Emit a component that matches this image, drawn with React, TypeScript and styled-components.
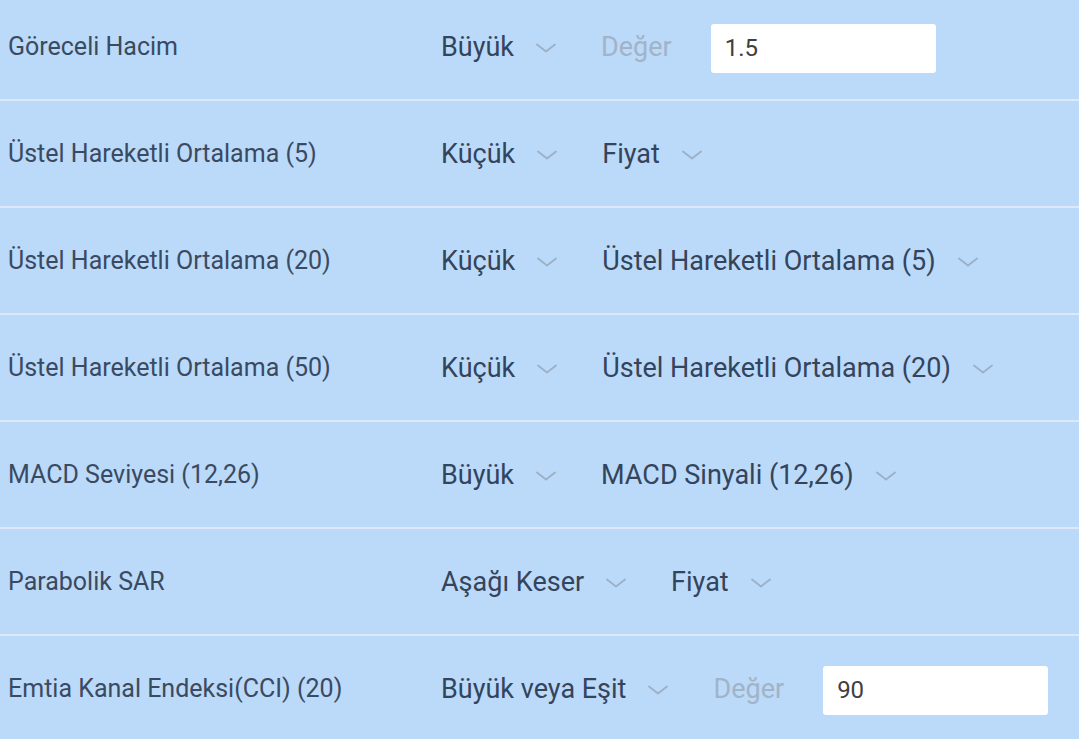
import React from "react";
import styled, { createGlobalStyle } from "styled-components";

const GlobalStyle = createGlobalStyle`
  html, body {
    margin: 0;
    padding: 0;
    background: #bbd9f9;
    overflow: hidden;
  }
  body {
    font-family: Roboto, "Noto Sans", sans-serif;
  }
`;

type Part =
  | { kind: "select"; text: string }
  | { kind: "value"; value: string };

type Rule = {
  label: string;
  parts: Part[];
};

const rules: Rule[] = [
  {
    label: "Göreceli Hacim",
    parts: [
      { kind: "select", text: "Büyük" },
      { kind: "value", value: "1.5" },
    ],
  },
  {
    label: "Üstel Hareketli Ortalama (5)",
    parts: [
      { kind: "select", text: "Küçük" },
      { kind: "select", text: "Fiyat" },
    ],
  },
  {
    label: "Üstel Hareketli Ortalama (20)",
    parts: [
      { kind: "select", text: "Küçük" },
      { kind: "select", text: "Üstel Hareketli Ortalama (5)" },
    ],
  },
  {
    label: "Üstel Hareketli Ortalama (50)",
    parts: [
      { kind: "select", text: "Küçük" },
      { kind: "select", text: "Üstel Hareketli Ortalama (20)" },
    ],
  },
  {
    label: "MACD Seviyesi (12,26)",
    parts: [
      { kind: "select", text: "Büyük" },
      { kind: "select", text: "MACD Sinyali (12,26)" },
    ],
  },
  {
    label: "Parabolik SAR",
    parts: [
      { kind: "select", text: "Aşağı Keser" },
      { kind: "select", text: "Fiyat" },
    ],
  },
  {
    label: "Emtia Kanal Endeksi(CCI) (20)",
    parts: [
      { kind: "select", text: "Büyük veya Eşit" },
      { kind: "value", value: "90" },
    ],
  },
];

const Chevron = () => (
  <ChevronIcon viewBox="0 0 20 10" fill="none">
    <path d="M1 1.5 L10 8.5 L19 1.5" stroke="#9cb0c6" strokeWidth="1.8" strokeLinecap="round" strokeLinejoin="round" />
  </ChevronIcon>
);

const App = () => {
  return (
    <>
      <GlobalStyle />
      <List>
        {rules.map((rule, idx) => (
          <Row key={idx} $last={idx === rules.length - 1}>
            <Label>{rule.label}</Label>
            <Controls>
              {rule.parts.map((part, i) =>
                part.kind === "select" ? (
                  <Select key={i}>
                    <SelectText>{part.text}</SelectText>
                    <Chevron />
                  </Select>
                ) : (
                  <ValueGroup key={i}>
                    <Placeholder>Değer</Placeholder>
                    <ValueInput defaultValue={part.value} />
                  </ValueGroup>
                )
              )}
            </Controls>
          </Row>
        ))}
      </List>
    </>
  );
};

export default App;

const List = styled.div`
  display: flex;
  flex-direction: column;
  margin-top: -6px;
`;

const Row = styled.div<{ $last: boolean }>`
  display: flex;
  align-items: center;
  height: 105px;
  border-bottom: 2px solid ${(p) => (p.$last ? "transparent" : "#dde9fa")};
`;

const Label = styled.div`
  width: 433px;
  padding-left: 8px;
  font-size: 25px;
  color: #3a4a61;
  white-space: nowrap;
`;

const Controls = styled.div`
  display: flex;
  align-items: center;
  gap: 45px;
`;

const Select = styled.div`
  display: flex;
  align-items: center;
  gap: 22px;
`;

const SelectText = styled.span`
  font-size: 27px;
  color: #34445b;
  white-space: nowrap;
`;

const ChevronIcon = styled.svg`
  width: 20px;
  height: 10px;
  margin-top: 2px;
`;

const ValueGroup = styled.div`
  display: flex;
  align-items: center;
  gap: 39px;
`;

const Placeholder = styled.span`
  font-size: 27px;
  color: #a2b3c7;
`;

const ValueInput = styled.input`
  box-sizing: border-box;
  width: 225px;
  height: 49px;
  margin-top: 3px;
  border: none;
  border-radius: 3px;
  background: #ffffff;
  padding: 0 14px;
  font-family: Roboto, "Noto Sans", sans-serif;
  font-size: 24px;
  color: #404040;
  outline: none;
`;
